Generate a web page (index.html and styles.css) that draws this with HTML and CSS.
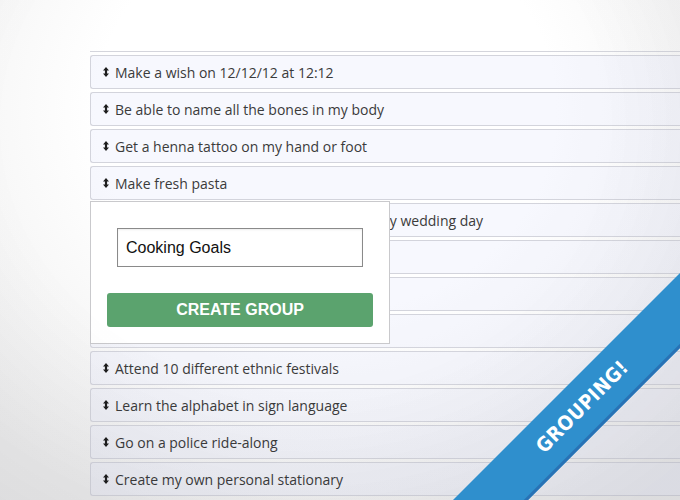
FILE: index.html
```html
<!DOCTYPE html>
<html lang="en">
<head>
    <title>Grouping</title>

    <link rel="stylesheet" href="styles.css">
</head>
<body>
    <div class="list">
        <div class="item"><svg class="grip" viewBox="0 0 6 10"><path d="M3 0 L6 3.6 H4.1 V6.4 H6 L3 10 L0 6.4 H1.9 V3.6 H0 Z"/></svg>Make a wish on 12/12/12 at 12:12</div>
        <div class="item"><svg class="grip" viewBox="0 0 6 10"><path d="M3 0 L6 3.6 H4.1 V6.4 H6 L3 10 L0 6.4 H1.9 V3.6 H0 Z"/></svg>Be able to name all the bones in my body</div>
        <div class="item"><svg class="grip" viewBox="0 0 6 10"><path d="M3 0 L6 3.6 H4.1 V6.4 H6 L3 10 L0 6.4 H1.9 V3.6 H0 Z"/></svg>Get a henna tattoo on my hand or foot</div>
        <div class="item"><svg class="grip" viewBox="0 0 6 10"><path d="M3 0 L6 3.6 H4.1 V6.4 H6 L3 10 L0 6.4 H1.9 V3.6 H0 Z"/></svg>Make fresh pasta</div>
        <div class="item"><svg class="grip" viewBox="0 0 6 10"><path d="M3 0 L6 3.6 H4.1 V6.4 H6 L3 10 L0 6.4 H1.9 V3.6 H0 Z"/></svg>Ride in a white horse drawn carriage on my wedding day</div>
        <div class="item"><svg class="grip" viewBox="0 0 6 10"><path d="M3 0 L6 3.6 H4.1 V6.4 H6 L3 10 L0 6.4 H1.9 V3.6 H0 Z"/></svg>Learn to juggle</div>
        <div class="item"><svg class="grip" viewBox="0 0 6 10"><path d="M3 0 L6 3.6 H4.1 V6.4 H6 L3 10 L0 6.4 H1.9 V3.6 H0 Z"/></svg>Bake a wedding cake</div>
        <div class="item"><svg class="grip" viewBox="0 0 6 10"><path d="M3 0 L6 3.6 H4.1 V6.4 H6 L3 10 L0 6.4 H1.9 V3.6 H0 Z"/></svg>Plant a tree</div>
        <div class="item"><svg class="grip" viewBox="0 0 6 10"><path d="M3 0 L6 3.6 H4.1 V6.4 H6 L3 10 L0 6.4 H1.9 V3.6 H0 Z"/></svg>Attend 10 different ethnic festivals</div>
        <div class="item"><svg class="grip" viewBox="0 0 6 10"><path d="M3 0 L6 3.6 H4.1 V6.4 H6 L3 10 L0 6.4 H1.9 V3.6 H0 Z"/></svg>Learn the alphabet in sign language</div>
        <div class="item"><svg class="grip" viewBox="0 0 6 10"><path d="M3 0 L6 3.6 H4.1 V6.4 H6 L3 10 L0 6.4 H1.9 V3.6 H0 Z"/></svg>Go on a police ride-along</div>
        <div class="item"><svg class="grip" viewBox="0 0 6 10"><path d="M3 0 L6 3.6 H4.1 V6.4 H6 L3 10 L0 6.4 H1.9 V3.6 H0 Z"/></svg>Create my own personal stationary</div>

        <div class="popup">
            <input class="groupName" type="text" value="Cooking Goals">
            <button class="createBtn">Create Group</button>
        </div>
    </div>

    <div class="vignette"></div>
    <div class="corner">
        <div class="ribbon">GROUPING!</div>
    </div>
</body>
</html>
```

FILE: styles.css
```css
html, body{
    margin: 0;
    height: 100%;
    overflow: hidden;
}
body{
    background: radial-gradient(ellipse 75% 90% at 48% 22%, #ffffff 45%, #ececec 100%);
    font-family: "Open Sans", "DejaVu Sans", sans-serif;
}
.list{
    position: relative;
    margin: 51px 0 0 90px;
    border-top: 1px solid #d4d5dc;
    padding-top: 3px;
    display: flex;
    flex-direction: column;
    gap: 3px;
}
.item{
    height: 32px;
    display: flex;
    align-items: center;
    padding-left: 12px;
    border: 1px solid #d3d4dc;
    border-right: none;
    border-radius: 3px 0 0 3px;
    background-color: rgba(228, 232, 252, 0.3);
    font-size: 14px;
    color: #3b3b3b;
    white-space: nowrap;
    overflow: hidden;
}
.grip{
    width: 6px;
    height: 10px;
    margin-right: 6px;
    fill: #1e1e1e;
}
.popup{
    position: absolute;
    left: 0;
    top: 149px;
    width: 300px;
    height: 143px;
    box-sizing: border-box;
    background: #fff;
    border: 1px solid #c9c9cc;
    display: flex;
    flex-direction: column;
    align-items: center;
    padding-top: 26px;
}
.groupName{
    width: 246px;
    height: 39px;
    box-sizing: border-box;
    border: 1px solid #8a8a8a;
    padding: 0 8px;
    font-family: "Liberation Sans", Arial, sans-serif;
    font-size: 16px;
    color: #111;
    outline: none;
    box-shadow: inset 0 1px 2px rgba(0,0,0,0.08);
}
.createBtn{
    margin-top: 26px;
    width: 266px;
    height: 34px;
    border: none;
    border-radius: 3px;
    background-color: #5ba36e;
    color: #fff;
    font-family: "Liberation Sans", Arial, sans-serif;
    font-weight: bold;
    font-size: 16px;
    text-transform: uppercase;
}
.vignette{
    position: fixed;
    inset: 0;
    pointer-events: none;
    background: radial-gradient(ellipse 80% 95% at 45% 25%, rgba(0,0,0,0) 55%, rgba(20,20,40,0.07) 100%);
}
.corner{
    position: fixed;
    inset: 0;
    overflow: hidden;
    pointer-events: none;
}
.ribbon{
    position: absolute;
    left: 383px;
    top: 381px;
    width: 400px;
    height: 50px;
    line-height: 51px;
    background-color: #2f8fcd;
    border-bottom: 3px solid #2872b5;
    transform: rotate(-45deg);
    color: #fff;
    text-align: center;
    font-family: "DejaVu Sans Condensed", "DejaVu Sans", sans-serif;
    font-weight: bold;
    font-size: 20px;
    letter-spacing: 0.5px;
}
```
